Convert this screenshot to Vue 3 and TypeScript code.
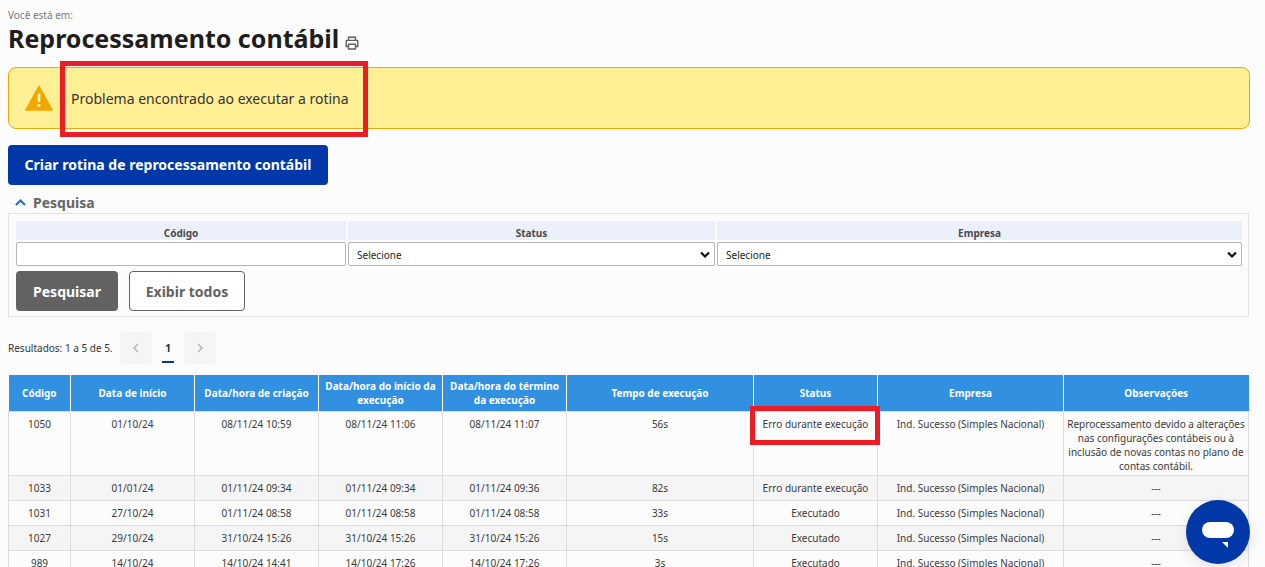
<script setup lang="ts">
interface Row { code: string; start: string; created: string; begin: string; end: string; time: string; status: string; obs: string }
const obsLong = 'Reprocessamento devido a alterações nas configurações contábeis ou à inclusão de novas contas no plano de contas contábil.'
const rows: Row[] = [
  { code: '1050', start: '01/10/24', created: '08/11/24 10:59', begin: '08/11/24 11:06', end: '08/11/24 11:07', time: '56s', status: 'Erro durante execução', obs: obsLong },
  { code: '1033', start: '01/01/24', created: '01/11/24 09:34', begin: '01/11/24 09:34', end: '01/11/24 09:36', time: '82s', status: 'Erro durante execução', obs: '---' },
  { code: '1031', start: '27/10/24', created: '01/11/24 08:58', begin: '01/11/24 08:58', end: '01/11/24 08:58', time: '33s', status: 'Executado', obs: '---' },
  { code: '1027', start: '29/10/24', created: '31/10/24 15:26', begin: '31/10/24 15:26', end: '31/10/24 15:26', time: '15s', status: 'Executado', obs: '---' },
  { code: '989', start: '14/10/24', created: '14/10/24 14:41', begin: '14/10/24 17:26', end: '14/10/24 17:26', time: '3s', status: 'Executado', obs: '---' },
]
const widths = [62, 124, 124, 124, 124, 187, 124, 186, 185]
const heads = ['Código', 'Data de início', 'Data/hora de criação', 'Data/hora do início da execução', 'Data/hora do término da execução', 'Tempo de execução', 'Status', 'Empresa', 'Observações']
</script>

<template>
  <div class="page">
    <div class="crumb">Você está em:</div>
    <div class="title-row">
      <h1>Reprocessamento contábil</h1>
      <svg class="printer" width="14" height="14" viewBox="0 0 14 14" fill="none" stroke="#5f5f5f" stroke-width="1.4">
        <path d="M3.5 4.5V1.2h7v3.3" />
        <path d="M3.5 10.5H1.2V5a.6.6 0 0 1 .6-.6h10.4a.6.6 0 0 1 .6.6v5.500h-2.300" />
        <path d="M3.500 8.200h7v4.800h-7z" />
      </svg>
    </div>

    <div class="alert">
      <svg class="warn" width="28" height="26" viewBox="0 0 28 26">
        <path d="M14 .8 27.600 25.200H.4z" fill="#f0a800" stroke="#f0a800" stroke-linejoin="round" />
        <rect x="12.700" y="8.500" width="2.700" height="8.500" rx="1.200" fill="#fff3b0" />
        <circle cx="14" cy="20.300" r="1.600" fill="#fff3b0" />
      </svg>
      <span>Problema encontrado ao executar a rotina</span>
    </div>

    <button class="create">Criar rotina de reprocessamento contábil</button>

    <div class="search-head">
      <svg width="11" height="7" viewBox="0 0 11 7" fill="none" stroke="#1a6fc0" stroke-width="2"><path d="M1 6 5.500 1.500 10 6" /></svg>
      <span>Pesquisa</span>
    </div>
    <div class="search-box">
      <div class="fields">
        <div class="field">
          <label>Código</label>
          <input type="text" />
        </div>
        <div class="field">
          <label>Status</label>
          <select><option>Selecione</option></select>
        </div>
        <div class="field">
          <label>Empresa</label>
          <select><option>Selecione</option></select>
        </div>
      </div>
      <div class="actions">
        <button class="btn-dark">Pesquisar</button>
        <button class="btn-outline">Exibir todos</button>
      </div>
    </div>

    <div class="pager">
      <span class="results">Resultados: 1 a 5 de 5.</span>
      <span class="nav">
        <svg width="6" height="10" viewBox="0 0 6 10" fill="none" stroke="#b5b5b5" stroke-width="1.500"><path d="M5 1 1 5l4 4" /></svg>
      </span>
      <span class="num">1</span>
      <span class="nav">
        <svg width="6" height="10" viewBox="0 0 6 10" fill="none" stroke="#b5b5b5" stroke-width="1.500"><path d="m1 1 4 4-4 4" /></svg>
      </span>
    </div>

    <table>
      <colgroup>
        <col v-for="(w, i) in widths" :key="i" :style="{ width: w + 'px' }" />
      </colgroup>
      <thead>
        <tr><th v-for="h in heads" :key="h">{{ h }}</th></tr>
      </thead>
      <tbody>
        <tr v-for="r in rows" :key="r.code">
          <td>{{ r.code }}</td>
          <td>{{ r.start }}</td>
          <td>{{ r.created }}</td>
          <td>{{ r.begin }}</td>
          <td>{{ r.end }}</td>
          <td>{{ r.time }}</td>
          <td>{{ r.status }}</td>
          <td>Ind. Sucesso (Simples Nacional)</td>
          <td>{{ r.obs }}</td>
        </tr>
      </tbody>
    </table>

    <div class="mark mark-alert"></div>
    <div class="mark mark-status"></div>

    <div class="chat">
      <svg width="34" height="32" viewBox="0 0 34 32">
        <rect x="1" y="6" width="32" height="16" rx="8" fill="#fff" />
        <path d="M21 26h6v6z" fill="#fff" />
      </svg>
    </div>
  </div>
</template>

<style scoped>
.page {
  position: relative;
  height: 567px;
  overflow: hidden;
  box-sizing: border-box;
  padding: 9px 16px 0 8px;
  background: #fcfcfc;
  font-family: "Noto Sans", "Open Sans", sans-serif;
  color: #333;
}
.crumb { font-size: 10px; line-height: 12px; color: #777; }
.title-row { display: flex; align-items: flex-end; height: 34px; }
h1 { margin: 0; font-size: 25px; line-height: 34px; font-weight: 700; color: #1e1e1e; }
.printer { margin: 0 0 5px 6px; }
.alert {
  box-sizing: border-box;
  display: flex;
  align-items: center;
  height: 62px;
  margin: 12px -1px 0 0;
  padding-left: 16px;
  background: #fff096;
  border: 1px solid #f0a800;
  border-radius: 8px;
  font-size: 14px;
  color: #333;
}
.warn { margin-right: 18px; flex: none; }
.create {
  display: block;
  width: 320px;
  height: 40px;
  margin-top: 16px;
  padding: 0 0 2px;
  border: 0;
  border-radius: 4px;
  background: #0038a8;
  color: #fff;
  font: 700 14px "Noto Sans", sans-serif;
}
.search-head { display: flex; align-items: center; height: 20px; margin-top: 7px; padding-left: 7px; }
.search-head span { margin-left: 7px; font-size: 14px; font-weight: 700; color: #666; }
.search-box {
  box-sizing: border-box;
  height: 104px;
  margin-top: 1px;
  padding: 7px 6px 0 7px;
  border: 1px solid #e3e3e3;
}
.fields { display: grid; grid-template-columns: 330px 367px 1fr; column-gap: 2px; }
.field { display: flex; flex-direction: column; min-width: 0; }
.field label {
  height: 19px;
  line-height: 25px;
  background: #ecf0fb;
  text-align: center;
  font-size: 10px;
  font-weight: 700;
  color: #4a4a4a;
}
.field input, .field select {
  box-sizing: border-box;
  width: 100%;
  height: 24px;
  margin-top: 2px;
  border: 1px solid #b5b5b5;
  border-radius: 2px;
  background-color: #fff;
  font: 10px "Noto Sans", sans-serif;
  color: #222;
}
.field select {
  appearance: none;
  padding: 2px 0 0 8px;
  background-image: url("data:image/svg+xml,%3Csvg xmlns='http://www.w3.org/2000/svg' width='10' height='7' viewBox='0 0 10 7'%3E%3Cpath d='M1 1.500 5 5.500 9 1.500' fill='none' stroke='%23111' stroke-width='2.200'/%3E%3C/svg%3E");
  background-repeat: no-repeat;
  background-position: right 4px center;
}
.actions { display: flex; gap: 11px; margin-top: 5px; }
.actions button { height: 40px; border-radius: 4px; font: 700 14px "Noto Sans", sans-serif; }
.btn-dark { width: 102px; border: 0; background: #626262; color: #fff; }
.btn-outline { width: 116px; border: 1px solid #626262; background: #fff; color: #626262; }
.pager { display: flex; align-items: center; height: 32px; margin-top: 15px; }
.results { width: 112px; font-size: 10px; color: #333; }
.nav {
  display: flex;
  align-items: center;
  justify-content: center;
  width: 32px;
  height: 32px;
  border-radius: 4px;
  background: #f5f5f5;
}
.num {
  position: relative;
  width: 32px;
  text-align: center;
  font-size: 10px;
  font-weight: 700;
  color: #1e2a44;
}
.num::after {
  content: "";
  position: absolute;
  left: 10px;
  bottom: -8px;
  width: 12px;
  height: 2px;
  background: #0038a8;
}
table {
  width: 1240px;
  margin: 11px 0 0 0;
  border-collapse: collapse;
  table-layout: fixed;
  font-size: 10px;
}
th {
  height: 36px;
  padding: 0 1px;
  box-sizing: border-box;
  background: #3290e0;
  color: #fff;
  font-weight: 700;
  line-height: 14px;
  border-left: 1px solid #fff;
  border-right: 1px solid #fff;
  text-align: center;
}
th:first-child { border-left: 0; }
th:last-child { border-right: 0; }
td {
  box-sizing: border-box;
  height: 25px;
  padding: 5px 3px 2px;
  text-align: center;
  vertical-align: top;
  line-height: 14px;
  color: #3a3a3a;
  border: 1px solid #ddd;
}
tbody tr:nth-child(even) td { background: #f5f5f5; }
.mark { position: absolute; border: 5px solid #ec1c24; box-sizing: border-box; }
.mark-alert { left: 60px; top: 61px; width: 308px; height: 76px; }
.mark-status { left: 750px; top: 406px; width: 130px; height: 39px; }
.chat {
  position: absolute;
  left: 1186px;
  top: 500px;
  display: flex;
  align-items: center;
  justify-content: center;
  width: 64px;
  height: 64px;
  border-radius: 50%;
  background: #0038a8;
  box-shadow: 0 4px 14px rgba(0, 0, 0, 0.1);
}
</style>
